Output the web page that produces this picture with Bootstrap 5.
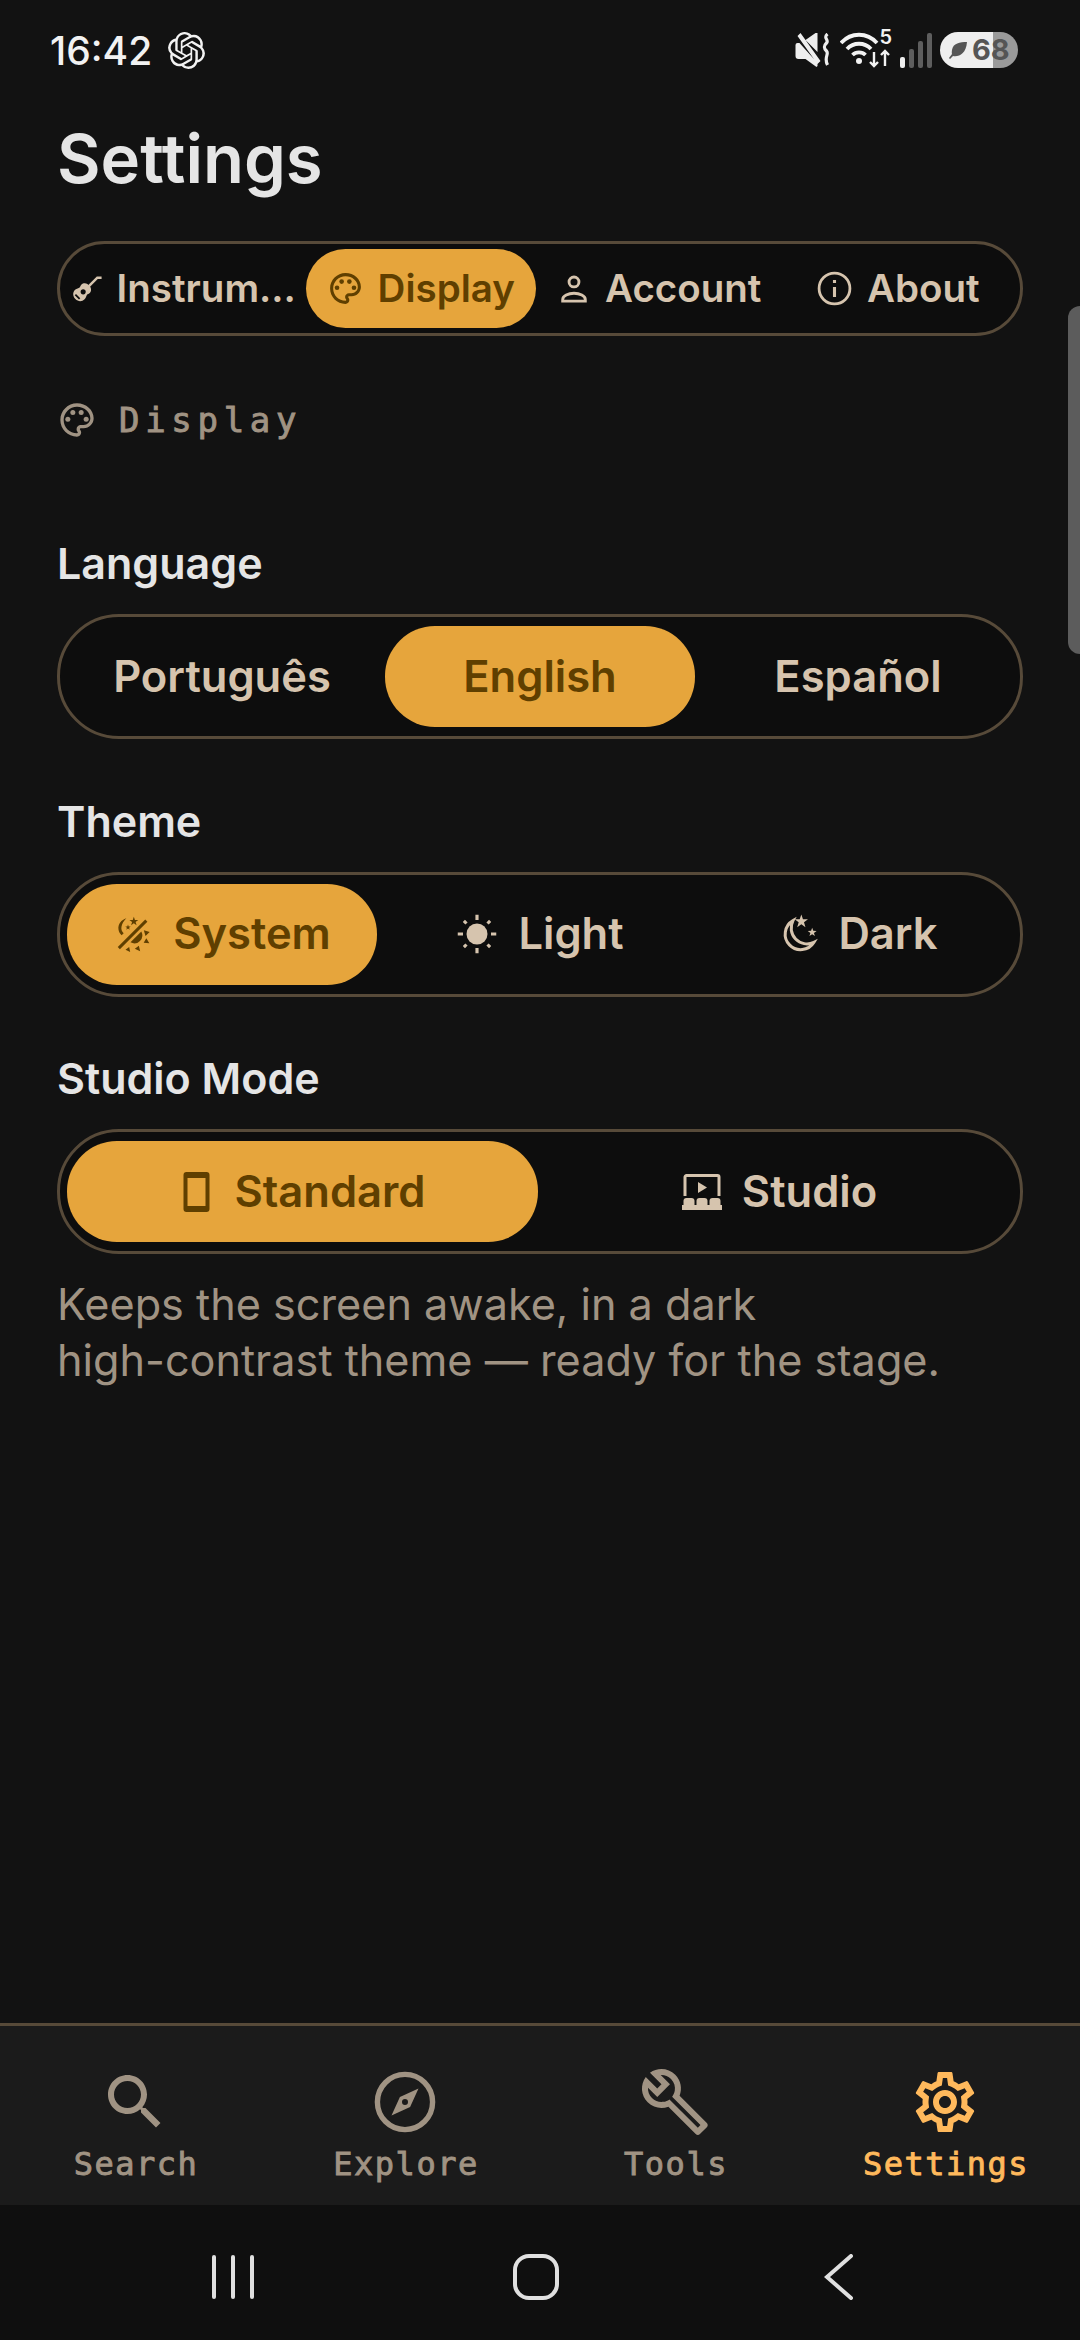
<!DOCTYPE html>
<html lang="en">
<head>
  <meta charset="UTF-8">
  <title>Settings</title>
  <link href="https://cdn.jsdelivr.net/npm/bootstrap@5.3.3/dist/css/bootstrap.min.css" rel="stylesheet">
  <style>
    body {
      background: #121212;
      font-family: Inter, "Liberation Sans", sans-serif;
      color: #e5e5e5;
      height: 2340px;
      overflow: hidden;
    }
    .app-shell { height: 2340px; position: relative; }

    /* status bar */
    .status-row { height: 100px; padding: 0 62px 0 50px; }
    .clock { font-size: 39px; font-weight: 500; color: #f2f2f2; line-height: 1; }
    .wifi-box { width: 52px; height: 36px; }
    .wifi-gen { position: absolute; right: 0; top: -7px; font-size: 20px; line-height: 24px; font-weight: 600; color: #f2f2f2; }
    .batt-pill {
      width: 78px; height: 36px; border-radius: 18px;
      background: linear-gradient(90deg, #eeeeee 68%, #9a9a9a 68%);
      color: #555; font-size: 29px; font-weight: 700; line-height: 36px;
      padding-left: 8px;
    }

    .main-area { padding: 0 57px; }
    .page-title { font-size: 67px; font-weight: 600; color: #e5e5e5; line-height: 1; margin: 25px 0 49px; }

    /* segmented pills */
    .seg-box {
      background: #0d0d0d;
      border: 3px solid #574a39;
      border-radius: 62px;
      padding: 9px 7px;
    }
    .seg-opt {
      flex: 1 1 0; min-width: 0;
      height: 101px; border-radius: 50px;
      color: #d6c4ae; font-size: 43.5px; font-weight: 600; white-space: nowrap;
      gap: 20px;
    }
    .seg-opt.is-on { background: #e6a53c; color: #5f3f00; }
    .tab-box { border-radius: 48px; padding: 5px 7px; }
    .tab-box .seg-opt { height: 79px; font-size: 38.5px; gap: 14px; }

    .section-head {
      font-family: "DejaVu Sans Mono", "Liberation Mono", monospace;
      font-size: 34px; color: #a09383; letter-spacing: 5.7px;
      -webkit-text-stroke: 0.9px #a09383;
      margin: 64px 0 0 0; gap: 22px; line-height: 40px;
    }
    .field-label { font-size: 43px; font-weight: 600; color: #e5e5e5; line-height: 48px; margin: 0 0 27px; }
    .label-first { margin-top: 99px; }
    .label-next { margin-top: 57.5px; }
    .help-text { font-size: 43.2px; color: #a09383; line-height: 56px; margin: 22px 0 0; }

    /* overlay scrollbar */
    .scroll-thumb {
      position: absolute; right: 0; top: 306px;
      width: 12px; height: 348px;
      background: #5c5c5c; border-radius: 12px 0 0 12px;
    }

    /* bottom tabs */
    .tab-bar { background: #1b1b1b; border-top: 3px solid #574a39; height: 182px; padding-top: 40px; }
    .tab-item {
      width: 270px;
      font-family: "DejaVu Sans Mono", "Liberation Mono", monospace;
      font-size: 32px; color: #a09383; line-height: 40px;
      letter-spacing: 1.5px;
      -webkit-text-stroke: 0.9px #a09383;
    }
    .tab-item.is-on { color: #ffb95c; -webkit-text-stroke-color: #ffb95c; }
    .tab-item svg { display: block; margin-bottom: 6px; }
    .tab-item span { padding-left: 2px; }

    .sys-bar { background: #0f0f0f; height: 135px; padding: 8px 8px 0 0; }
    .sys-key { width: 303px; }
  </style>
</head>
<body>

<svg width="0" height="0" class="position-absolute">
  <defs>
    <path id="star" d="M0-1 .235-.324 .951-.309 .38.124 .588.809 0 .4-.588.809-.38.124-.951-.309-.235-.324z"/>
    <g id="palette">
      <path d="M12 22C6.49 22 2 17.51 2 12S6.49 2 12 2s10 4.04 10 9c0 3.31-2.69 6-6 6h-1.77c-.28 0-.5.22-.5.5 0 .12.05.23.13.33.41.47.64 1.06.64 1.67 0 1.38-1.12 2.5-2.5 2.5zm0-18c-4.41 0-8 3.59-8 8s3.59 8 8 8c.28 0 .5-.22.5-.5 0-.16-.08-.28-.14-.35-.41-.46-.63-1.05-.63-1.65 0-1.38 1.12-2.5 2.5-2.5H16c2.21 0 4-1.79 4-4 0-3.86-3.59-7-8-7z"/>
      <circle cx="6.5" cy="11.5" r="1.5"/><circle cx="9.5" cy="7.5" r="1.5"/><circle cx="14.5" cy="7.5" r="1.5"/><circle cx="17.5" cy="11.5" r="1.5"/>
    </g>
  </defs>
</svg>

<div class="app-shell d-flex flex-column">

  <!-- status bar -->
  <div class="status-row d-flex align-items-center justify-content-between">
    <div class="d-flex align-items-center gap-3">
      <span class="clock">16:42</span>
      <svg width="37" height="37" viewBox="0 0 24 24" fill="#f2f2f2">
        <path d="M22.2819 9.8211a5.9847 5.9847 0 0 0-.5157-4.9108 6.0462 6.0462 0 0 0-6.5098-2.9A6.0651 6.0651 0 0 0 4.9807 4.1818a5.9847 5.9847 0 0 0-3.9977 2.9 6.0462 6.0462 0 0 0 .7427 7.0966 5.98 5.98 0 0 0 .511 4.9107 6.051 6.051 0 0 0 6.5146 2.9001A5.9847 5.9847 0 0 0 13.2599 24a6.0557 6.0557 0 0 0 5.7718-4.2058 5.9894 5.9894 0 0 0 3.9977-2.9001 6.0557 6.0557 0 0 0-.7475-7.0729zm-9.022 12.6081a4.4755 4.4755 0 0 1-2.8764-1.0408l.1419-.0804 4.7783-2.7582a.7948.7948 0 0 0 .3927-.6813v-6.7369l2.02 1.1686a.071.071 0 0 1 .038.052v5.5826a4.504 4.504 0 0 1-4.4945 4.4944zm-9.6607-4.1254a4.4708 4.4708 0 0 1-.5346-3.0137l.142.0852 4.783 2.7582a.7712.7712 0 0 0 .7806 0l5.8428-3.3685v2.3324a.0804.0804 0 0 1-.0332.0615L9.74 19.9502a4.4992 4.4992 0 0 1-6.1408-1.6464zM2.3408 7.8956a4.485 4.485 0 0 1 2.3655-1.9728V11.6a.7664.7664 0 0 0 .3879.6765l5.8144 3.3543-2.0201 1.1685a.0757.0757 0 0 1-.071 0l-4.8303-2.7865A4.504 4.504 0 0 1 2.3408 7.872zm16.5963 3.8558L13.1038 8.364 15.1192 7.2a.0757.0757 0 0 1 .071 0l4.8303 2.7913a4.4944 4.4944 0 0 1-.6765 8.1042v-5.6772a.79.79 0 0 0-.407-.667zm2.0107-3.0231l-.142-.0852-4.7735-2.7818a.7759.7759 0 0 0-.7854 0L9.409 9.2297V6.8974a.0662.0662 0 0 1 .0284-.0615l4.8303-2.7866a4.4992 4.4992 0 0 1 6.6802 4.66zM8.3065 12.863l-2.02-1.1638a.0804.0804 0 0 1-.038-.0567V6.0742a4.4992 4.4992 0 0 1 7.3757-3.4537l-.142.0805L8.704 5.459a.7948.7948 0 0 0-.3927.6813zm1.0976-2.3654l2.602-1.4998 2.6069 1.4998v2.9994l-2.5974 1.4997-2.6067-1.4997Z"/>
      </svg>
    </div>
    <div class="d-flex align-items-center gap-2">
      <svg width="37" height="34" viewBox="0 0 36 34" fill="#eeeeee">
        <path d="M0 12a2 2 0 0 1 2-2h2l18 20v3l-1 1-11-8H3a3 3 0 0 1-3-3zM10 7l10-7h2v19zM2 3l3-3 20 28-3 3z"/>
        <path d="M32 1c-5 4 2 6-1 9s-3 5 0 8-3 6 1 14" fill="none" stroke="#eeeeee" stroke-width="3.2"/>
      </svg>
      <div class="wifi-box position-relative">
        <svg width="52" height="36" viewBox="0 0 52 36" fill="none" stroke="#f2f2f2" stroke-width="3.8">
          <path d="M1 11c10-11 26-11 36 0M7 17c6.5-7 17.5-7 24 0M12.5 23c3.5-3.5 9.5-3.5 13 0"/>
          <circle cx="19" cy="29" r="3" fill="#f2f2f2" stroke="none"/>
          <path stroke-width="2.4" d="M34 20v14m-4-4 4 4 4-4M45 34V19m-4 4 4-4 4 4"/>
        </svg>
        <span class="wifi-gen">5</span>
      </div>
      <svg width="32" height="36" viewBox="0 0 32 36">
        <rect x="0" y="25" width="5" height="11" rx="2" fill="#eeeeee"/>
        <rect x="9" y="17" width="5" height="19" rx="2" fill="#5e5e5e"/>
        <rect x="18" y="9" width="5" height="27" rx="2" fill="#5e5e5e"/>
        <rect x="27" y="1" width="5" height="35" rx="2" fill="#5e5e5e"/>
      </svg>
      <div class="batt-pill d-flex align-items-center gap-1">
        <svg width="20" height="20" viewBox="0 0 20 20" fill="#555" class="flex-shrink-0"><path d="M19 2C12 2 5 3 4 10c-.3 2-.3 3 0 4l-3 4 1 1 3-3c6 1 13-2 14-14z"/></svg>
        <span>68</span>
      </div>
    </div>
  </div>

  <div class="main-area flex-grow-1">
    <h1 class="page-title">Settings</h1>

    <div class="seg-box tab-box d-flex gap-2">
      <div class="seg-opt d-flex align-items-center justify-content-center">
        <svg width="34" height="34" viewBox="0 0 24 24" fill="#d6c4ae">
          <path d="M13 8.5c-1.5-.8-3.2-.6-4.2.4-.7.7-.7 1.5-1.3 2-.7.6-2 .5-3.2 1.7-1.9 1.9-1.7 4.6.2 6.5s4.6 2.1 6.5.2c1.2-1.2 1.1-2.5 1.7-3.2.5-.6 1.3-.6 2-1.3 1-1 1.2-2.7.4-4.2z"/>
          <path d="M13 11 20 4h3" fill="none" stroke="#d6c4ae" stroke-width="1.8"/>
          <circle cx="10" cy="14" r="1.8" fill="#0d0d0d"/>
          <path d="m4.5 16 3 3" stroke="#0d0d0d" stroke-width="1.2"/>
        </svg>
        <span>Instrum…</span>
      </div>
      <div class="seg-opt is-on d-flex align-items-center justify-content-center">
        <svg width="37" height="37" viewBox="0 0 24 24" fill="#5f3f00"><use href="#palette"/></svg>
        <span>Display</span>
      </div>
      <div class="seg-opt d-flex align-items-center justify-content-center">
        <svg width="34" height="34" viewBox="0 0 24 24" fill="none" stroke="#d6c4ae" stroke-width="2">
          <circle cx="12" cy="7" r="3.5"/>
          <path d="M4 20.5v-1c0-2.500 4-4.500 8-4.500s8 2 8 4.500v1z"/>
        </svg>
        <span>Account</span>
      </div>
      <div class="seg-opt d-flex align-items-center justify-content-center">
        <svg width="37" height="37" viewBox="0 0 24 24" fill="none" stroke="#d6c4ae" stroke-width="1.8">
          <circle cx="12" cy="12" r="10"/>
          <path d="M12 11v6.5M12 6.5v2" stroke-width="2"/>
        </svg>
        <span>About</span>
      </div>
    </div>

    <div class="section-head d-flex align-items-center">
      <svg width="40" height="40" viewBox="0 0 24 24" fill="#a09383"><use href="#palette"/></svg>
      <span>Display</span>
    </div>

    <div class="field-label label-first">Language</div>
    <div class="seg-box d-flex gap-2">
      <div class="seg-opt d-flex align-items-center justify-content-center">Português</div>
      <div class="seg-opt is-on d-flex align-items-center justify-content-center">English</div>
      <div class="seg-opt d-flex align-items-center justify-content-center">Español</div>
    </div>

    <div class="field-label label-next">Theme</div>
    <div class="seg-box d-flex gap-2">
      <div class="seg-opt is-on d-flex align-items-center justify-content-center">
        <svg width="40" height="40" viewBox="0 0 24 24" fill="#5f3f00">
          <path d="M8 2.5C5 3.5 2.800 6 3.300 9.300c.2 1.400.9 2.600 1.900 3.500l1.200-1.200C5.200 10.400 4.800 9 5.100 7.600 5.400 5.800 6.500 4 8 2.500z"/>
          <use href="#star" transform="translate(12.5 4.5) scale(2.8)"/>
          <use href="#star" transform="translate(9 8) scale(1.7)"/>
          <path d="M3.500 20.500 20 4" stroke="#5f3f00" stroke-width="1.8"/>
          <path d="M17 10.500A4.800 4.800 0 0 1 10.500 17z"/>
          <path d="m18.500 9.800 3.500 1-2.500 2.400zM20 14.500l1.800 3-3.400-.2zM15.500 19l.8 3.300-3.200-1.500zM9.700 19.800l.6 3-2.800-1.400z"/>
        </svg>
        <span>System</span>
      </div>
      <div class="seg-opt d-flex align-items-center justify-content-center">
        <svg width="42" height="42" viewBox="0 0 24 24" fill="#d6c4ae" stroke="#d6c4ae">
          <circle cx="12" cy="12" r="6" stroke="none"/>
          <path stroke-width="1.8" d="M12 1v3M12 20v3M1 12h3M20 12h3M4.500 4.500l1.500 1.500M18 18l1.500 1.500M4.500 19.500 6 18M18 6l1.500-1.500"/>
        </svg>
        <span>Light</span>
      </div>
      <div class="seg-opt d-flex align-items-center justify-content-center">
        <svg width="40" height="42" viewBox="0 0 24 24" fill="#d6c4ae">
          <path d="M9 4A9.300 9.300 0 1 0 21.500 17 9.500 9.500 0 0 1 9 4z" fill="none" stroke="#d6c4ae" stroke-width="1.8"/>
          <use href="#star" transform="translate(14 4.5) scale(4.2)"/>
          <use href="#star" transform="translate(20.5 11) scale(2.8)"/>
        </svg>
        <span>Dark</span>
      </div>
    </div>

    <div class="field-label label-next">Studio Mode</div>
    <div class="seg-box d-flex gap-2">
      <div class="seg-opt is-on d-flex align-items-center justify-content-center ps-1">
        <svg width="27" height="40" viewBox="0 0 26 40" fill="#5f3f00" class="me-1">
          <path fill-rule="evenodd" d="M3 0h20a3 3 0 0 1 3 3v34a3 3 0 0 1-3 3H3a3 3 0 0 1-3-3V3a3 3 0 0 1 3-3zm1 6v28h18V6z"/>
        </svg>
        <span>Standard</span>
      </div>
      <div class="seg-opt d-flex align-items-center justify-content-center">
        <svg width="40" height="36" viewBox="0 0 40 36" fill="#d6c4ae">
          <path d="M3 22V3a1.500 1.500 0 0 1 1.500-1.500h31A1.500 1.500 0 0 1 37 3v19" fill="none" stroke="#d6c4ae" stroke-width="3"/>
          <path d="M16 8l9 5.500-9 5.500z"/>
          <rect x="1.500" y="24" width="11" height="10" rx="3"/>
          <rect x="14.500" y="24" width="11" height="10" rx="3"/>
          <rect x="27.500" y="24" width="11" height="10" rx="3"/>
          <rect x="0" y="31" width="40" height="5"/>
        </svg>
        <span>Studio</span>
      </div>
    </div>

    <p class="help-text">Keeps the screen awake, in a dark<br>high-contrast theme — ready for the stage.</p>
  </div>

  <!-- bottom tabs -->
  <nav class="tab-bar d-flex">
    <div class="tab-item d-flex flex-column align-items-center">
      <svg width="72" height="72" viewBox="0 0 24 24" fill="#a09383"><path d="M15.5 14h-.79l-.28-.27C15.41 12.59 16 11.11 16 9.5 16 5.91 13.09 3 9.5 3S3 5.91 3 9.5 5.91 16 9.5 16c1.610 0 3.090-.59 4.230-1.570l.27.28v.79l5 4.990L20.490 19l-4.990-5zm-6 0C7.010 14 5 11.990 5 9.500S7.010 5 9.500 5 14 7.010 14 9.500 11.990 14 9.500 14z"/></svg>
      <span>Search</span>
    </div>
    <div class="tab-item d-flex flex-column align-items-center">
      <svg width="72" height="72" viewBox="0 0 24 24" fill="#a09383">
        <circle cx="12" cy="12" r="9.2" fill="none" stroke="#a09383" stroke-width="1.8"/>
        <path fill-rule="evenodd" d="M16.500 7.500 13.700 13.700 7.500 16.500 10.300 10.300zM12 11a1 1 0 1 0 0 2 1 1 0 0 0 0-2z"/>
      </svg>
      <span>Explore</span>
    </div>
    <div class="tab-item d-flex flex-column align-items-center">
      <svg width="72" height="72" viewBox="0 0 24 24" fill="#a09383"><path d="M22.610 18.990l-9.080-9.080c.93-2.340.45-5.100-1.440-7C9.790.61 6.210.4 3.660 2.260L7.500 6.110 6.080 7.520 2.250 3.690C.39 6.230.6 9.820 2.900 12.110c1.860 1.860 4.570 2.350 6.890 1.480l9.110 9.110c.39.39 1.020.39 1.410 0l2.300-2.300c.4-.38.4-1.010 0-1.410zm-3 1.600l-9.460-9.460c-.61.45-1.290.72-2 .82-1.360.2-2.790-.21-3.830-1.250C3.370 9.760 2.930 8.500 3 7.260l3.090 3.090 4.240-4.240-3.090-3.090c1.240-.07 2.490.37 3.440 1.310 1.080 1.080 1.490 2.570 1.240 3.960-.12.71-.42 1.370-.88 1.960l9.450 9.450-.88.880z"/></svg>
      <span>Tools</span>
    </div>
    <div class="tab-item is-on d-flex flex-column align-items-center">
      <svg width="72" height="72" viewBox="0 0 24 24" fill="#ffb95c"><path d="M19.430 12.980c.04-.32.07-.64.07-.98 0-.34-.03-.66-.07-.98l2.110-1.650c.19-.15.24-.42.12-.64l-2-3.460c-.09-.16-.26-.25-.44-.25-.06 0-.12.01-.17.03l-2.490 1c-.52-.4-1.080-.73-1.690-.98l-.38-2.650C14.460 2.180 14.250 2 14 2h-4c-.25 0-.46.18-.49.42l-.38 2.650c-.61.25-1.170.59-1.690.98l-2.490-1c-.06-.02-.12-.03-.18-.03-.17 0-.34.09-.43.25l-2 3.460c-.13.22-.07.49.12.64l2.110 1.650c-.04.32-.07.65-.07.98 0 .33.03.66.07.98l-2.110 1.650c-.19.15-.24.42-.12.64l2 3.460c.09.16.26.25.44.25.06 0 .12-.01.17-.03l2.490-1c.52.4 1.080.73 1.690.98l.38 2.650c.03.24.24.42.49.42h4c.25 0 .46-.18.49-.42l.38-2.650c.61-.25 1.170-.59 1.690-.98l2.490 1c.06.02.12.03.18.03.17 0 .34-.09.43-.25l2-3.460c.12-.22.07-.49-.12-.64l-2.110-1.650zm-1.980-1.710c.04.31.05.52.05.73 0 .21-.02.43-.05.73l-.14 1.130.89.7 1.080.84-.7 1.210-1.270-.51-1.040-.42-.9.68c-.43.32-.84.56-1.250.73l-1.060.43-.16 1.130-.2 1.350h-1.400l-.19-1.350-.16-1.130-1.060-.43c-.43-.18-.83-.41-1.230-.71l-.91-.7-1.060.43-1.270.51-.7-1.210 1.080-.84.89-.7-.14-1.130c-.03-.31-.05-.54-.05-.74s.02-.43.05-.73l.14-1.130-.89-.7-1.080-.84.7-1.210 1.270.51 1.040.42.9-.68c.43-.32.84-.56 1.250-.73l1.060-.43.16-1.130.2-1.350h1.390l.19 1.350.16 1.130 1.060.43c.43.18.83.41 1.230.71l.91.7 1.060-.43 1.270-.51.7 1.210-1.070.85-.89.7.14 1.130zM12 8c-2.210 0-4 1.790-4 4s1.790 4 4 4 4-1.790 4-4-1.790-4-4-4zm0 6c-1.100 0-2-.9-2-2s.9-2 2-2 2 .9 2 2-.9 2-2 2z"/></svg>
      <span>Settings</span>
    </div>
  </nav>

  <!-- android keys -->
  <div class="sys-bar d-flex align-items-center justify-content-center">
    <div class="sys-key d-flex justify-content-center">
      <svg width="42" height="44" viewBox="0 0 42 44" fill="#e0e0e0">
        <rect x="0" y="0" width="4" height="44" rx="2"/><rect x="19" y="0" width="4" height="44" rx="2"/><rect x="38" y="0" width="4" height="44" rx="2"/>
      </svg>
    </div>
    <div class="sys-key d-flex justify-content-center">
      <svg width="46" height="46" viewBox="0 0 46 46" fill="none" stroke="#e0e0e0" stroke-width="4"><rect x="2" y="2" width="42" height="42" rx="14"/></svg>
    </div>
    <div class="sys-key d-flex justify-content-center">
      <svg width="30" height="46" viewBox="0 0 30 46" fill="none" stroke="#e0e0e0" stroke-width="4" stroke-linecap="round"><path d="M27 2 3 23l24 21"/></svg>
    </div>
  </div>

  <div class="scroll-thumb"></div>
</div>

<script src="https://cdn.jsdelivr.net/npm/bootstrap@5.3.3/dist/js/bootstrap.bundle.min.js"></script>
</body>
</html>
